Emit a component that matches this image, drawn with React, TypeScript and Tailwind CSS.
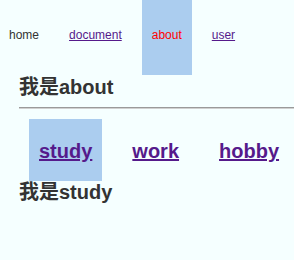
import React from 'react';

const font = { fontFamily: '"Liberation Sans", Arial, "Noto Sans CJK SC", sans-serif' };

const App = () => {
  return (
    <div className="min-h-[260px] w-full bg-[#f5ffff] text-[#333333]" style={font}>
      {/* Top nav */}
      <nav className="flex items-start gap-[10px] text-[12px] leading-[14px]">
        <a className="h-[75px] pl-[9px] pr-[10px] pt-[28px] text-[#333333] no-underline">home</a>
        <a href="#" className="h-[75px] px-[10px] pt-[28px] text-[#551a8b] underline">document</a>
        <a href="#" className="h-[75px] bg-[#abcdef] px-[10px] pt-[28px] text-[#ff0000] no-underline">about</a>
        <a href="#" className="h-[75px] px-[10px] pt-[28px] text-[#551a8b] underline">user</a>
      </nav>

      <div className="pl-[19px]">
        <h2 className="mt-[1px] text-[20px] font-bold leading-[23px]">我是about</h2>
        <hr className="mt-[8px] h-0 border-t border-b border-t-[#9a9a9a] border-b-[#d0d0d0]" />

        {/* Sub nav */}
        <nav className="ml-[10px] mt-[10px] flex items-start gap-[20px] text-[20px] font-bold leading-[23px]">
          <a href="#" className="h-[62px] bg-[#abcdef] px-[10px] pt-[21px] text-[#551a8b] underline">study</a>
          <a href="#" className="h-[62px] px-[10px] pt-[21px] text-[#551a8b] underline">work</a>
          <a href="#" className="h-[62px] px-[10px] pt-[21px] text-[#551a8b] underline">hobby</a>
        </nav>
        <h3 className="text-[20px] font-bold leading-[23px]">我是study</h3>
      </div>
    </div>
  );
};

export default App;
